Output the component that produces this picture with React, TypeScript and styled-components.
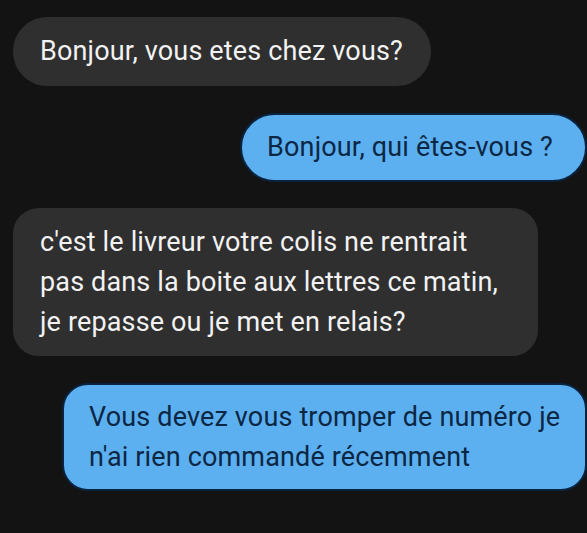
import React from 'react';
import styled, { createGlobalStyle } from 'styled-components';

type Message = {
    id: number;
    mine: boolean;
    lines: string[];
};

const messages: Message[] = [
    { id: 1, mine: false, lines: ['Bonjour, vous etes chez vous?'] },
    { id: 2, mine: true, lines: ['Bonjour, qui êtes-vous ?'] },
    {
        id: 3,
        mine: false,
        lines: [
            "c'est le livreur votre colis ne rentrait",
            'pas dans la boite aux lettres ce matin,',
            'je repasse ou je met en relais?',
        ],
    },
    { id: 4, mine: true, lines: ['Vous devez vous tromper de numéro je', "n'ai rien commandé récemment"] },
];

export default function App() {
    return (
        <>
            <GlobalStyle />
            <Thread>
                {messages.map((m) => (
                    <Row key={m.id} $mine={m.mine}>
                        <Bubble $mine={m.mine} $multi={m.lines.length > 1}>
                            {m.lines.map((line, i) => (
                                <Line key={i}>{line}</Line>
                            ))}
                        </Bubble>
                    </Row>
                ))}
            </Thread>
        </>
    );
}

const GlobalStyle = createGlobalStyle`
    html, body {
        margin: 0;
        background: #131313;
    }
`;

const Thread = styled.div`
    display: flex;
    flex-direction: column;
    gap: 26.5px;
    width: 587px;
    height: 533px;
    box-sizing: border-box;
    padding: 17px 0 0 13px;
    background: #131313;
    font-family: Roboto, 'Liberation Sans', sans-serif;
`;

const Row = styled.div<{ $mine: boolean }>`
    display: flex;
    justify-content: ${(p) => (p.$mine ? 'flex-end' : 'flex-start')};
`;

const Bubble = styled.div<{ $mine: boolean; $multi: boolean }>`
    width: ${(p) => (p.$multi ? '525px' : 'auto')};
    box-sizing: border-box;
    padding: ${(p) => (p.$multi ? '12px' : '13px')} ${(p) => (p.$mine && !p.$multi ? '32px' : '26px')}
        ${(p) => (p.$multi ? '12px' : '13px')} 25px;
    border-radius: ${(p) => (p.$multi ? '26px' : '35px')};
    font-size: 27px;
    line-height: ${(p) => (p.$multi ? '40px' : '39px')};
    letter-spacing: 0.15px;
    background: ${(p) => (p.$mine ? '#5cb0f0' : '#2f2f2f')};
    color: ${(p) => (p.$mine ? '#0c2744' : '#f2f2f2')};
    border: 2px solid ${(p) => (p.$mine ? '#0a2440' : '#2f2f2f')};
`;

const Line = styled.div`
    white-space: nowrap;
`;
